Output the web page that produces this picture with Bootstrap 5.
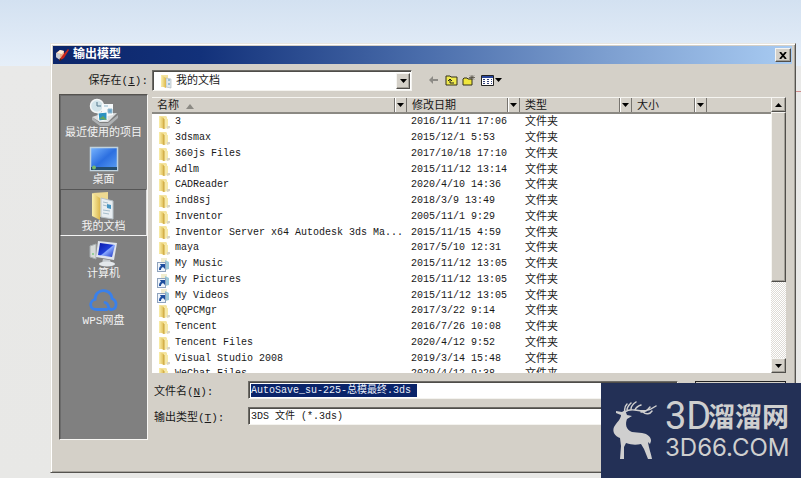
<!DOCTYPE html>
<html lang="zh-CN">
<head>
<meta charset="utf-8">
<meta name="viewport" content="width=device-width, initial-scale=1">
<title>输出模型</title>
<link href="https://cdn.jsdelivr.net/npm/bootstrap@5.3.0/dist/css/bootstrap.min.css" rel="stylesheet">
<style>
:root{--face:#d4d0c8}
body{font:11px/14px "Liberation Mono","Noto Sans CJK SC",monospace;color:#181818;
  background:linear-gradient(#d3e1f1,#e6eff9 66px,#e9e9e8 66px,#e8e8e6)}
.dlg{margin:43px 5px 5px 50px;background:var(--face);border:1px solid;border-color:#e8e6e0 #55534f #55534f #e8e6e0;
  box-shadow:inset 1px 1px #fff,inset -1px -1px #a5a29b;padding:2px 3px 32px 2px;min-height:0}
.axis-line{right:0;top:91px;width:5px;height:1px;background:#d08b8b}
.titlebar{height:18px;background:linear-gradient(90deg,#0c2569,#12317a 20%,#4a6dab 50%,#7d9fd0 75%,#a8cbf2);color:#fff;padding:0 1px 0 2px}
.titlebar h1{font-size:12px;line-height:18px}
.bevel{background:var(--face);border:1px solid;border-color:#f6f5f2 #504e4a #504e4a #f6f5f2;box-shadow:inset -1px -1px #a3a098;padding:0;color:#000;border-radius:0}
.btn-x{width:16px;height:14px}
.lookin{padding:6px 0 0;height:30px}
.lookin label{width:95px}
.sunk{background:#fff;border:1px solid;border-color:#6e6c67 #f4f3ef #f4f3ef #6e6c67;box-shadow:inset 1px 1px #4f4d49;padding:2px 1px 1px 2px}
.look-box{width:260px;height:21px}
.look-box>svg{margin-right:2px}
.sunk select,.sunk input{appearance:none;border:0;outline:0;background:transparent;padding:0;border-radius:0;color:#181818;font:inherit;min-width:0}
.drop{width:14px}
.tool{border:0;background:none;padding:0;height:16px}
.main{padding:0 6px;gap:4px;min-height:0}
.places{width:89px;background:#808080;border:1px solid;border-color:#55534f #f8f7f4 #f8f7f4 #55534f;box-shadow:inset 1px 1px #6b6b6b}
.place{height:47px;border:1px solid transparent;background:none;color:#f2f2f2;padding:2px 0 0;white-space:nowrap}
.place.on{border-color:#555 #ddd #f4f4f4 #555}
.place svg{height:28px;width:30px}
.place span{line-height:14px}
.right-col{padding-top:3px}
.files{min-height:0;background:#fff}
.grid-wrap{min-width:0;overflow:hidden}
.file-grid{table-layout:fixed;width:100%;border-collapse:separate;border-spacing:0}
.file-grid th{background:var(--face);height:17px;padding:0;font-weight:400;border-top:1px solid #f5f4f0;border-bottom:2px solid #8b8983}
.file-grid th button{width:13px;height:14px;border:0;border-left:1px solid #77746f;border-right:1px solid #77746f;background:none;box-shadow:inset 1px 0 #fff;padding:0}
.file-grid th span{padding-left:5px;line-height:16px;height:14px}
.c-name{width:255px}.c-date{width:113px}.c-type{width:112px}.c-size{width:75px}
.file-grid td{height:16px;line-height:14px;padding:0 0 0 5px;white-space:nowrap;overflow:hidden}
.file-grid tr:nth-child(4n) td{height:15px}
.file-grid td:nth-child(-n+2){font-size:10px}
.file-grid td:nth-child(2){padding-left:4px}
.file-grid td svg{width:14px;height:15px;margin-right:4px;flex:none}
.scroller{width:15px}
.scroller .bevel{height:15px}
.track{background:repeating-conic-gradient(#fff 0 25%,#dedbd5 0 50%) 0 0/2px 2px}
.scroller .thumb{height:69%}
.form-line label{width:96px;line-height:14px;padding:4px 0 0 2px}
.form-line:last-child{margin-bottom:15px}
.field-box{width:430px;height:18px;font-size:10px;padding:1px 1px 0 2px}
.sunk input.picked{background:#0a246a;color:#e8edf8;width:166px;height:13px}
.save-btn{width:91px;height:18px;border:1px solid #222;background:var(--face);padding:0}
.brand{right:0;bottom:0;width:200px;height:95px;background:#233056;color:#cfcfcf}
.brand svg{width:48px;height:60px}
.brand-top{font:700 27px/30px "Noto Sans CJK SC",sans-serif}
.brand-top b{font:400 38px/30px Roboto,sans-serif;width:43px}
.brand-sub{font:400 24px/24px Inter,sans-serif;margin-top:5px}
</style>
</head>
<body class="vh-100 d-flex flex-column overflow-hidden position-relative">
<svg class="position-absolute" width="0" height="0" aria-hidden="true">
  <defs>
    <linearGradient id="gy"><stop stop-color="#fbf0ad"/><stop offset="1" stop-color="#dcb84e"/></linearGradient>
    <linearGradient id="gb" x2="1" y2="1"><stop stop-color="#79b6ff"/><stop offset=".5" stop-color="#2c6fe0"/><stop offset="1" stop-color="#5da1f4"/></linearGradient>
    <linearGradient id="gs" x2="1" y2="1"><stop stop-color="#0715a8"/><stop offset=".5" stop-color="#2040d8"/><stop offset=".55" stop-color="#88a8ff"/><stop offset="1" stop-color="#1830c0"/></linearGradient>
    <symbol id="folder" viewBox="0 0 14 15"><path d="M2 1h7l1 1v11H2z" fill="#f4e4a0"/><path d="M7 3l4 1v9l-4 1z" fill="#f6e9a8"/><path d="M2 1l5 2v11l-5-2z" fill="url(#gy)"/><path d="M7 4v10" stroke="#c9a23c"/><path d="M10 11h3v2l-3 1z" fill="#d9d5c6"/></symbol>
    <symbol id="link" viewBox="0 0 14 15"><path d="M4 1h6v12H4z" fill="#f1edcf"/><path d="M8 3l4 2v7l-4 1z" fill="#9ac8d9"/><rect x=".5" y="5.500" width="8" height="9" fill="#eef4fb" stroke="#8fa3bd"/><path d="M2 13c0-3 1-4 2-4L3 7h5v5L6 10c-2 1-2 2-2 3z" fill="#1e4f9e"/></symbol>
  </defs>
</svg>
<div class="axis-line position-absolute"></div>

<main class="dlg flex-grow-1 d-flex flex-column">
  <header class="titlebar d-flex align-items-center">
    <svg width="14" height="14" viewBox="0 0 14 14" aria-hidden="true"><path d="M1 5l4-3 4 1v6l-4 3-4-3z" fill="#e9b08c"/><path d="M1 5l4 1v6l-4-3z" fill="#c9cdd6"/><path d="M5 2l4 1-2 3-5-1z" fill="#fff0dc"/><path d="M13 1l-6 7-3 5 5-3 5-8z" fill="#c8261b"/><path d="M4 13l1-3 2 2z" fill="#402018"/></svg>
    <h1 class="mb-0 fw-bold flex-grow-1 ps-1">输出模型</h1>
    <button class="bevel btn-x d-flex align-items-center justify-content-center" type="button" aria-label="关闭"><svg width="8" height="7" viewBox="0 0 8 7"><path d="M1 0l6 7M7 0L1 7" stroke="#000" stroke-width="1.800"/></svg></button>
  </header>

  <div class="lookin d-flex align-items-start flex-shrink-0">
    <label class="text-end pt-1" for="look">保存在(<u>I</u>):</label>
    <div class="d-flex align-items-center ps-1">
      <div class="sunk look-box d-flex align-items-center">
        <svg width="15" height="15" viewBox="0 0 15 15" class="ms-1" aria-hidden="true"><path d="M2 1h7v12H2z" fill="#f3e2a0"/><path d="M7 4l5 1v9l-5-1z" fill="#dfe8ee" stroke="#a7b2ba" stroke-width=".6"/><path d="M9 6h2M9 10h2" stroke="#5795bd"/><path d="M2 1l5 3v10l-5-2z" fill="url(#gy)"/></svg>
        <select id="look" class="flex-grow-1"><option>我的文档</option></select>
        <span class="bevel drop h-100 d-flex align-items-center justify-content-center"><svg width="7" height="4" viewBox="0 0 7 4"><path d="M0 0h7L3.500 4z"/></svg></span>
      </div>
      <div class="d-flex align-items-center ms-3 gap-1">
        <button class="tool" type="button" aria-label="后退"><svg width="13" height="14" viewBox="0 0 13 14"><path d="M1 6l4-4v3h5v2H5v3z" fill="#8d8b86"/></svg></button>
        <button class="tool" type="button" aria-label="向上一级"><svg width="13" height="14" viewBox="0 0 13 14"><path d="M1 2h4l1 1h6v8H1z" fill="#f0ea4e" stroke="#33311a"/><path d="M5 9h4M5 9V5M3 7l2-2 2 2" fill="none" stroke="#222"/></svg></button>
        <button class="tool" type="button" aria-label="新建文件夹"><svg width="14" height="14" viewBox="0 0 14 14"><path d="M1 5l1-1h3l1 1h4v6H1z" fill="#f0e63c" stroke="#33311a"/><path d="M10 1v5M7 3.500h6M8 1.500l4 4M12 1.500l-4 4" stroke="#555046" stroke-width=".8"/></svg></button>
        <button class="tool" type="button" aria-label="查看"><svg width="23" height="14" viewBox="0 0 23 14"><path d="M1.500 1.500h12v10h-12z" fill="#fff" stroke="#222"/><path d="M2 3h11" stroke="#29459b" stroke-width="2"/><path d="M3 5.500h2M7 5.500h2M11 5.500h1M3 7.500h2M7 7.500h2M11 7.500h1M3 9.500h2M7 9.500h2M11 9.500h1" stroke="#35437a"/><path d="M15 4h7l-3.500 4z"/></svg></button>
      </div>
    </div>
  </div>

  <div class="main d-flex flex-grow-1">
    <nav class="places d-flex flex-column flex-shrink-0" aria-label="位置">
      <button class="place d-flex flex-column align-items-center" type="button"><svg viewBox="0 0 30 28"><path d="M3 19l8 6h8l10-8v3l-9 8h-9l-8-6z" fill="#aeb1b3"/><path d="M3 19l9-3 16-1-9 9h-8z" fill="#dcdedf"/><circle cx="8" cy="8" r="6.500" fill="#d2e4ea" stroke="#f4f6f6" stroke-width="1.500"/><path d="M8 4v4h4" fill="none" stroke="#54798c"/><path d="M13 6h11v11l-11 2z" fill="#f6f9fa"/><path d="M15 8h4M19 11h4v4h-4z" stroke="#92b9cd" fill="#6ba5cd"/><path d="M9 15l9-1v8l-8 1z" fill="#2d92c1" stroke="#fff"/><path d="M10 21l4-3 4 4z" fill="#63a55e"/></svg><span>最近使用的项目</span></button>
      <button class="place d-flex flex-column align-items-center" type="button"><svg viewBox="0 0 30 28"><path d="M1.500 2.500h27v23h-27z" fill="url(#gb)" stroke="#bfd2df" stroke-width="1.500"/><path d="M2 22h26v3H2z" fill="#244e70"/><circle cx="5" cy="22.500" r="2" fill="#77ba6b"/></svg><span>桌面</span></button>
      <button class="place on d-flex flex-column align-items-center" type="button"><svg viewBox="0 0 30 28"><path d="M4 1l15-1v24l-9 1z" fill="#edd991"/><path d="M12 6l12 3v18l-12-2z" fill="#e8eef2" stroke="#b9c3c9"/><path d="M14 10l5 1M14 13l4 1M14 18l7 1M14 21l6 1" stroke="#a6bdca"/><path d="M18 12l4 1v4l-4-1z" fill="#4595c2"/><path d="M3 1l8 5v22l-8-4z" fill="url(#gy)"/></svg><span>我的文档</span></button>
      <button class="place d-flex flex-column align-items-center" type="button"><svg viewBox="0 0 30 28"><path d="M1 7l6-2v15l-6-2z" fill="#d7dbd8" stroke="#a6adae"/><path d="M3 15h2" stroke="#57c45c"/><path d="M9 2l19 2-3 17-18-3z" fill="#dfe4ed"/><path d="M11 4l15 2-3 12-14-2z" fill="url(#gs)"/><path d="M14 20l7 1 1 3h-9z" fill="#c5cace"/><ellipse cx="18" cy="25" rx="8" ry="2.500" fill="#e4e8eb"/></svg><span>计算机</span></button>
      <button class="place d-flex flex-column align-items-center" type="button"><svg viewBox="0 0 30 28"><path d="M18 23.500H8C0 23.500 0 15 6 13.500 6 2 22 1.500 23 12.500c6 3 5 11-1 11-4 0-1-6-6-7" fill="none" stroke="#3a80ea" stroke-width="2.800" stroke-linecap="round"/></svg><span>WPS网盘</span></button>
    </nav>

    <div class="right-col d-flex flex-column flex-grow-1">
      <div class="files d-flex flex-grow-1">
        <div class="grid-wrap flex-grow-1">
          <table class="file-grid">
            <colgroup><col class="c-name"><col class="c-date"><col class="c-type"><col class="c-size"><col></colgroup>
            <thead><tr>
              <th scope="col"><div class="d-flex justify-content-between"><span>名称 <svg width="8" height="5" viewBox="0 0 8 5"><path d="M0 5h8L4 0z" fill="#8b8983"/></svg></span><button type="button" aria-label="筛选名称"><svg class="d-block mx-auto" width="7" height="4" viewBox="0 0 7 4"><path d="M0 0h7L3.500 4z"/></svg></button></div></th>
              <th scope="col"><div class="d-flex justify-content-between"><span>修改日期</span><button type="button" aria-label="筛选日期"><svg class="d-block mx-auto" width="7" height="4" viewBox="0 0 7 4"><path d="M0 0h7L3.500 4z"/></svg></button></div></th>
              <th scope="col"><div class="d-flex justify-content-between"><span>类型</span><button type="button" aria-label="筛选类型"><svg class="d-block mx-auto" width="7" height="4" viewBox="0 0 7 4"><path d="M0 0h7L3.500 4z"/></svg></button></div></th>
              <th scope="col"><div class="d-flex justify-content-between"><span>大小</span><button type="button" aria-label="筛选大小"><svg class="d-block mx-auto" width="7" height="4" viewBox="0 0 7 4"><path d="M0 0h7L3.500 4z"/></svg></button></div></th>
              <th></th>
            </tr></thead>
            <tbody id="rows"></tbody>
          </table>
        </div>
        <div class="scroller d-flex flex-column flex-shrink-0">
          <button class="bevel d-flex align-items-center justify-content-center" type="button" aria-label="向上滚动"><svg width="7" height="4" viewBox="0 0 7 4"><path d="M0 4h7L3.500 0z"/></svg></button>
          <div class="track flex-grow-1"><div class="bevel thumb"></div></div>
          <button class="bevel d-flex align-items-center justify-content-center" type="button" aria-label="向下滚动"><svg width="7" height="4" viewBox="0 0 7 4"><path d="M0 0h7L3.500 4z"/></svg></button>
        </div>
      </div>

      <div class="form-line d-flex align-items-center mt-2">
        <label for="fname">文件名(<u>N</u>):</label>
        <div class="sunk field-box d-flex align-items-center"><input id="fname" class="picked" type="text" value="AutoSave_su-225-总模最终.3ds"></div>
        <button class="save-btn ms-auto" type="button" aria-label="保存"></button>
      </div>
      <div class="form-line d-flex align-items-center mt-2">
        <label for="ftype">输出类型(<u>T</u>):</label>
        <div class="sunk field-box d-flex align-items-center">
          <select id="ftype" class="flex-grow-1"><option>3DS 文件 (*.3ds)</option></select>
        </div>
      </div>
    </div>
  </div>
</main>

<aside class="brand position-absolute d-flex align-items-center ps-2">
  <svg viewBox="0 0 48 60" aria-hidden="true"><g fill="none" stroke="#cfcfcf" stroke-width="1.500" stroke-linecap="round"><path d="M16 11C15 7 16 5 18 3M18 9c0-3 2-5 4-7M22 8c0-3 2-5 5-7M16 11c9-7 16 5 31-6M26 9c1-3 3-4 6-5M32 11c4 0 7-2 9-5M34 11c3 3 7 2 9-1"/></g><path d="M7 10l6 1 3-2 2 5 5 1-5 3c-2 5-1 11 5 13l10 1c6 1 9 4 9 8l-1 3-2-2c1 7 3 11 4 17h-4l-4-10-3-5c-5 1-9 1-15-1l-2 4v12h-4l1-13-1-8c-5-2-8-6-6-11 3-5 7-8 7-12l-5-2z" fill="#cfcfcf"/></svg>
  <div class="ms-2 text-nowrap">
    <div class="brand-top d-flex align-items-center"><b>3D</b><span>溜溜网</span></div>
    <div class="brand-sub">3D66.COM</div>
  </div>
</aside>

<script>
const files = [
  ["3","2016/11/11 17:06"],["3dsmax","2015/12/1 5:53"],["360js Files","2017/10/18 17:10"],["Adlm","2015/11/12 13:14"],
  ["CADReader","2020/4/10 14:36"],["ind8sj","2018/3/9 13:49"],["Inventor","2005/11/1 9:29"],
  ["Inventor Server x64 Autodesk 3ds Ma...","2015/11/15 4:59"],["maya","2017/5/10 12:31"],
  ["My Music","2015/11/12 13:05","link"],["My Pictures","2015/11/12 13:05","link"],["My Videos","2015/11/12 13:05","link"],
  ["QQPCMgr","2017/3/22 9:14"],["Tencent","2016/7/26 10:08"],["Tencent Files","2020/4/12 9:52"],
  ["Visual Studio 2008","2019/3/14 15:48"],["WeChat Files","2020/4/12 9:38"]
];
document.getElementById("rows").innerHTML = files.map(([name, date, icon = "folder"]) =>
  `<tr><td><div class="d-flex align-items-center"><svg aria-hidden="true"><use href="#${icon}"/></svg>${name}</div></td><td>${date}</td><td>文件夹</td><td></td><td></td></tr>`).join("");
</script>
<script src="https://cdn.jsdelivr.net/npm/bootstrap@5.3.0/dist/js/bootstrap.bundle.min.js"></script>
</body>
</html>
